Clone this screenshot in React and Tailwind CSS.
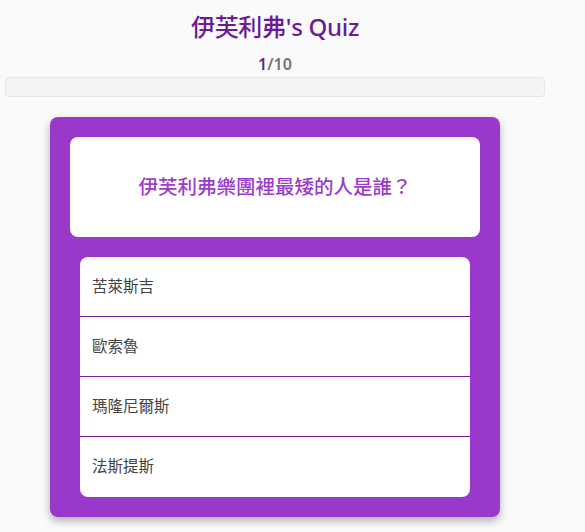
import React from 'react';

const options = ['苦萊斯吉', '歐索魯', '瑪隆尼爾斯', '法斯提斯'];

const App = () => {
  return (
    <div
      className="min-h-screen bg-[#fafafa]"
      style={{ fontFamily: '"Noto Sans", "Noto Sans CJK TC", sans-serif' }}
    >
      <div className="w-[550px] flex flex-col">
        {/* Header */}
        <h1 className="pt-[10px] text-center text-[24px] leading-[34px] font-medium tracking-[-0.3px] text-[#6a1b9a]">
          伊芙利弗's Quiz
        </h1>
        <p className="mt-[8px] text-center text-[16px] leading-[24px] font-semibold text-[#757575]">
          <span className="text-[#5e2a78]">1</span>/10
        </p>

        {/* Progress */}
        <div className="mt-[1px] mx-[5px] h-[20px] rounded-[4px] border border-[#e6e6e6] bg-[#f4f4f4]" />

        {/* Quiz card */}
        <div className="mt-[20px] mx-[50px] rounded-[8px] bg-[#9b38cc] p-[20px] shadow-[0_4px_8px_rgba(0,0,0,0.3)]">
          <div className="h-[100px] rounded-[8px] bg-white flex items-center justify-center">
            <h2 className="text-[19.5px] font-medium text-[#9b3cca]">伊芙利弗樂團裡最矮的人是誰？</h2>
          </div>

          <ul className="mt-[20px] mx-[10px] rounded-[8px] bg-white overflow-hidden">
            {options.map((option, index) => (
              <li
                key={index}
                className={
                  index < options.length - 1
                    ? 'h-[60px] flex items-center px-[12px] text-[15.5px] text-[#444444] border-b border-solid border-b-[#7b1fa2]'
                    : 'h-[60px] flex items-center px-[12px] text-[15.5px] text-[#444444]'
                }
              >
                {option}
              </li>
            ))}
          </ul>
        </div>
      </div>
    </div>
  );
};

export default App;
